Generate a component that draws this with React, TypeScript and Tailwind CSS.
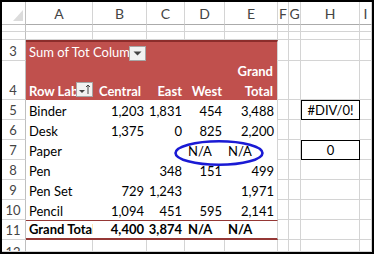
import React from 'react';

const colLetters = ['A', 'B', 'C', 'D', 'E', 'F', 'G', 'H', 'I'];

const pivotRows = [
  ['Binder', '1,203', '1,831', '454', '3,488'],
  ['Desk', '1,375', '0', '825', '2,200'],
  ['Paper', '', '', 'N/A', 'N/A'],
  ['Pen', '', '348', '151', '499'],
  ['Pen Set', '729', '1,243', '', '1,971'],
  ['Pencil', '1,094', '451', '595', '2,141'],
];

const grandTotal = ['Grand Total', '4,400', '3,874', 'N/A', 'N/A'];

// what sits in column H next to the pivot (row 5 and 7)
const sideBoxes: Record<number, string> = { 5: '#DIV/0!', 7: '0' };

const RowNum = ({ n, top }: { n: number; top?: boolean }) => (
  <div
    className={`flex justify-center pr-[1px] border-r border-b border-r-[#bfbfbf] border-b-[#d4d4d4] text-[#444] overflow-hidden ${
      top ? 'items-start leading-[18px] pt-[3px]' : 'items-end leading-[18px]'
    }`}
  >
    {n}
  </div>
);

const Grid = ({ className = '', children }: { className?: string; children?: React.ReactNode }) => (
  <div className={`border-r border-b border-[#d4d4d4] ${className}`}>{children}</div>
);

const FilterButton = ({ sort }: { sort?: boolean }) => (
  <div className="w-[17px] h-[15px] shrink-0 bg-[#f2f2f2] border border-[#a6a6a6] flex items-center justify-center">
    {sort ? (
      <svg width="13" height="11" viewBox="0 0 13 11">
        <path d="M1 6h6l-3 3z" fill="#444" />
        <path d="M10 1v9M8 3l2-2 2 2" stroke="#444" strokeWidth="1" fill="none" />
      </svg>
    ) : (
      <svg width="9" height="5" viewBox="0 0 9 5">
        <path d="M0.5 0.5h8l-4 4z" fill="#444" />
      </svg>
    )}
  </div>
);

const isNum = (s: string) => /^[0-9,]+$/.test(s);

export default function App() {
  return (
    <div
      className="relative w-[374px] h-[254px] border-2 border-black bg-white overflow-hidden text-[13px] text-black"
      style={{ fontFamily: 'Lato, "Liberation Sans", sans-serif' }}
    >
      <div className="grid grid-cols-[24px_67px_54px_38px_40px_53px_11px_12px_59px_12px] grid-rows-[23px_7px_8px_21px_39px_repeat(7,20px)_12px]">
        {/* column headers */}
        <div className="relative border-r border-b border-[#bfbfbf]">
          <svg className="absolute left-[11px] top-[8px]" width="10" height="11" viewBox="0 0 10 11">
            <path d="M10 0v11H0z" fill="#dcdcdc" />
          </svg>
        </div>
        {colLetters.map((c) => (
          <div
            key={c}
            className="flex items-center justify-center border-r border-r-[#d4d4d4] border-b border-b-[#ababab] text-[#444] text-[14px]"
          >
            {c}
          </div>
        ))}

        {/* rows 1 and 2, nearly hidden */}
        {[1, 2].map((r) => (
          <React.Fragment key={r}>
            <RowNum n={r} top />
            {colLetters.map((c) => (
              <Grid key={c} />
            ))}
          </React.Fragment>
        ))}

        {/* row 3 */}
        <RowNum n={3} />
        <div className="col-span-2 bg-[#c0504d] border-t-2 border-[#8c2d2b] flex items-end text-white leading-[18px]">
          <span className="flex-1 overflow-hidden whitespace-nowrap pl-[3px]">Sum of Tot Column Labels</span>
          <div className="mr-[1px]">
            <FilterButton />
          </div>
        </div>
        <div className="bg-[#c0504d] border-t-2 border-[#8c2d2b]" />
        <div className="bg-[#c0504d] border-t-2 border-[#8c2d2b]" />
        <div className="bg-[#c0504d] border-t-2 border-[#8c2d2b] border-r border-r-[#d4d4d4]" />
        <Grid />
        <Grid />
        <Grid />
        <Grid />

        {/* row 4 */}
        <RowNum n={4} />
        <div className="bg-[#c0504d] flex items-end text-white font-bold leading-[18px]">
          <span className="flex-1 overflow-hidden whitespace-nowrap pl-[3px]">Row Labels</span>
          <div className="mb-[3px]">
            <FilterButton sort />
          </div>
        </div>
        <div className="bg-[#c0504d] flex items-end justify-end pr-[6px] text-white font-bold leading-[18px]">Central</div>
        <div className="bg-[#c0504d] flex items-end justify-end pr-[3px] text-white font-bold leading-[18px]">East</div>
        <div className="bg-[#c0504d] flex items-end justify-end pr-[3px] text-white font-bold leading-[18px]">West</div>
        <div className="bg-[#c0504d] flex flex-col items-end justify-end pr-[4px] text-white font-bold leading-[18px] border-r border-r-[#d4d4d4]">
          <span className="mb-[2px]">Grand</span>
          <span>Total</span>
        </div>
        <Grid />
        <Grid />
        <Grid />
        <Grid />

        {/* pivot body, rows 5 - 10 */}
        {pivotRows.map((row, i) => {
          const r = i + 5;
          return (
            <React.Fragment key={r}>
              <RowNum n={r} />
              {row.map((v, j) => (
                <div
                  key={j}
                  className={`flex items-end leading-[18px] whitespace-nowrap overflow-hidden ${
                    j === 0 ? 'pl-[3px]' : isNum(v) ? 'justify-end pr-[3px]' : 'pl-[3px]'
                  } ${j === 4 ? 'border-r border-[#d4d4d4]' : ''}`}
                >
                  {v}
                </div>
              ))}
              <Grid />
              <Grid />
              {sideBoxes[r] ? (
                <div className="flex items-end justify-center leading-[18px] border border-black">{sideBoxes[r]}</div>
              ) : (
                <Grid className={r === 6 ? 'border-b-0' : ''} />
              )}
              <Grid />
            </React.Fragment>
          );
        })}

        {/* row 11, grand total */}
        <RowNum n={11} />
        {grandTotal.map((v, j) => (
          <div
            key={j}
            className={`flex items-end font-bold leading-[17px] whitespace-nowrap overflow-hidden border-t border-b-2 border-[#953735] ${
              j === 0 ? 'pl-[3px]' : isNum(v) ? 'justify-end pr-[3px]' : 'pl-[3px]'
            } ${j === 4 ? 'border-r border-r-[#d4d4d4]' : ''}`}
          >
            {v}
          </div>
        ))}
        <Grid />
        <Grid />
        <Grid />
        <Grid />

        {/* row 12 */}
        <RowNum n={12} top />
        {colLetters.map((c) => (
          <Grid key={c} />
        ))}
      </div>

      {/* hand-drawn circle round the N/A cells */}
      <svg className="absolute left-[171px] top-[137px]" width="92" height="28" viewBox="0 0 92 28">
        <ellipse cx="46" cy="14" rx="43.5" ry="11.8" fill="none" stroke="#1a1ad4" strokeWidth="2.6" />
      </svg>
    </div>
  );
}
